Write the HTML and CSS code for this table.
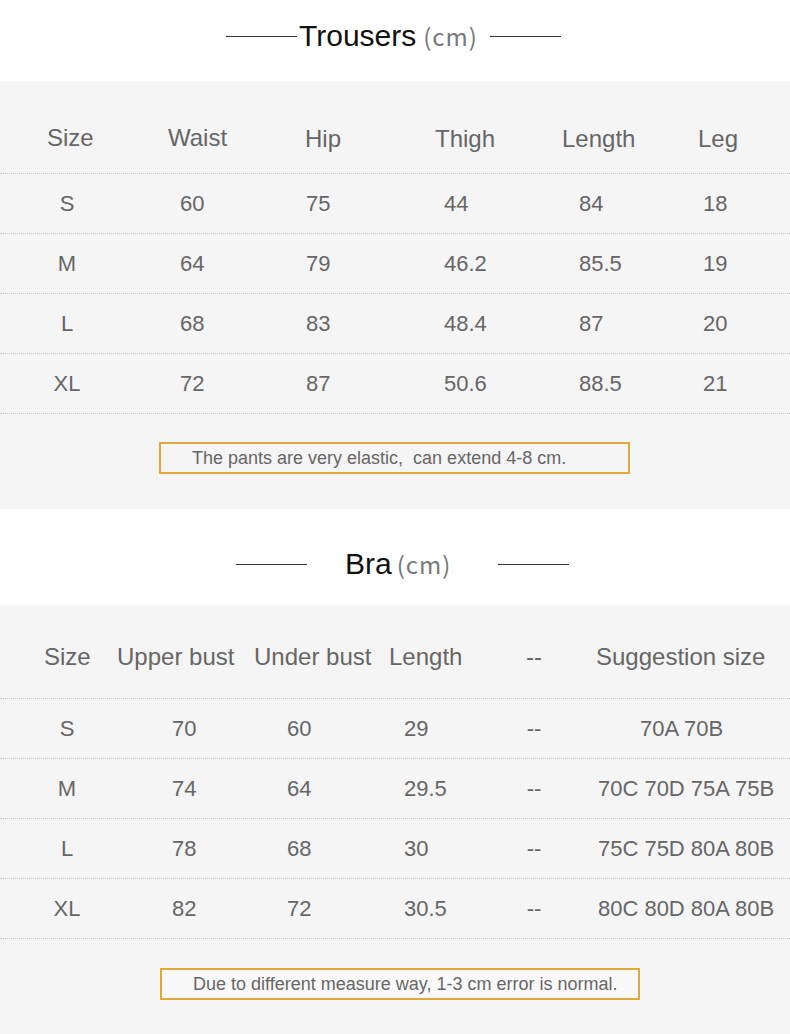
FILE: index.html
```html
<!DOCTYPE html>
<html lang="en">
<head>
<meta charset="utf-8">
<title>Size chart</title>
<link rel="stylesheet" href="styles.css">
</head>
<body>
<section class="title title-trousers">
  <span class="rule"></span>
  <h2 class="heading"><span class="name">Trousers</span><span class="unit">(cm)</span></h2>
  <span class="rule"></span>
</section>

<section class="panel panel-trousers">
  <div class="row head trousers-head">
    <span>Size</span><span>Waist</span><span class="low">Hip</span><span class="low">Thigh</span><span class="low">Length</span><span class="low">Leg</span>
  </div>
  <div class="row data trousers-data"><span>S</span><span>60</span><span>75</span><span>44</span><span>84</span><span>18</span></div>
  <div class="row data trousers-data"><span>M</span><span>64</span><span>79</span><span>46.2</span><span>85.5</span><span>19</span></div>
  <div class="row data trousers-data"><span>L</span><span>68</span><span>83</span><span>48.4</span><span>87</span><span>20</span></div>
  <div class="row data trousers-data"><span>XL</span><span>72</span><span>87</span><span>50.6</span><span>88.5</span><span>21</span></div>
  <div class="note note-trousers">The pants are very elastic,&nbsp; can extend 4-8 cm.</div>
</section>

<section class="title title-bra">
  <span class="rule"></span>
  <h2 class="heading"><span class="name">Bra</span><span class="unit">(cm)</span></h2>
  <span class="rule"></span>
</section>

<section class="panel panel-bra">
  <div class="row head bra-head">
    <span>Size</span><span>Upper bust</span><span>Under bust</span><span class="low">Length</span><span class="dash">--</span><span>Suggestion size</span>
  </div>
  <div class="row data bra-data"><span>S</span><span>70</span><span>60</span><span>29</span><span class="dash">--</span><span class="sug sug-short">70A 70B</span></div>
  <div class="row data bra-data"><span>M</span><span>74</span><span>64</span><span>29.5</span><span class="dash">--</span><span class="sug">70C 70D 75A 75B</span></div>
  <div class="row data bra-data"><span>L</span><span>78</span><span>68</span><span>30</span><span class="dash">--</span><span class="sug">75C 75D 80A 80B</span></div>
  <div class="row data bra-data"><span>XL</span><span>82</span><span>72</span><span>30.5</span><span class="dash">--</span><span class="sug">80C 80D 80A 80B</span></div>
  <div class="note note-bra">Due to different measure way, 1-3 cm error is normal.</div>
</section>
</body>
</html>
```

FILE: styles.css
```css
* { box-sizing: border-box; margin: 0; padding: 0; }

html, body {
  background: #ffffff;
  width: 790px;
}

body {
  font-family: "Liberation Sans", Arial, sans-serif;
  color: #666666;
}

/* ---------- section titles ---------- */
.title {
  display: flex;
  align-items: flex-start;
}

.title-trousers {
  height: 81px;
  padding: 19px 0 0 226px;
}

.title-bra {
  height: 96px;
  padding: 38px 0 0 236px;
}

.rule {
  display: block;
  width: 71px;
  height: 1px;
  background: #333333;
  margin-top: 17px;
}

.heading {
  font-weight: normal;
  font-size: 30px;
  line-height: 34px;
  height: 34px;
  color: #111111;
  white-space: nowrap;
}

.title-trousers .heading { margin: 0 12px 0 2px; }
.title-bra .heading { margin: 0 47px 0 38px; }

.name {
  font-family: "Liberation Sans", Arial, sans-serif;
}

.unit {
  font-family: "Noto Sans CJK SC", "Noto Sans", sans-serif;
  font-size: 24px;
  line-height: 1;
  color: #777777;
  margin-left: 7px;
  letter-spacing: 1px;
}

.title-bra .unit { margin-left: 5px; }

/* ---------- panels ---------- */
.panel {
  background: #f5f5f5;
}

.panel-trousers { height: 428px; }
.panel-bra { height: 429px; }

.row {
  display: grid;
  border-bottom: 1px dotted #c4c4c4;
  white-space: nowrap;
}

.head {
  font-size: 24px;
  line-height: 28px;
  color: #666666;
}

.data {
  height: 60px;
  align-items: center;
  font-size: 22px;
  line-height: 26px;
  color: #666666;
}

/* trousers */
.trousers-head {
  height: 93px;
  padding: 43px 0 0 47px;
  grid-template-columns: 121px 137px 130px 127px 136px auto;
}

.trousers-head .low { position: relative; top: 1px; }

.trousers-data {
  grid-template-columns: 180px 126px 138px 135px 124px auto;
}

.trousers-data > span:first-child,
.bra-data > span:first-child {
  text-align: center;
}

.trousers-data > span:first-child { padding-right: 46px; }

/* bra */
.bra-head {
  height: 94px;
  padding: 38px 0 0 44px;
  grid-template-columns: 73px 137px 135px 83px 124px auto;
}

.bra-data {
  grid-template-columns: 172px 115px 117px 68px 124px 180px;
}

.bra-data > span:first-child { padding-right: 38px; }

.dash { text-align: center; }
.sug { text-align: center; }
.sug-short { padding-right: 9px; }

/* notes */
.note {
  border: 2px solid #e3a73b;
  height: 32px;
  font-size: 18px;
  line-height: 28px;
  padding-left: 31px;
  color: #666666;
  white-space: nowrap;
}

.note-trousers {
  width: 471px;
  margin: 28px 0 0 159px;
}

.note-bra {
  width: 480px;
  margin: 29px 0 0 160px;
  background: #f9f9f9;
}
```
